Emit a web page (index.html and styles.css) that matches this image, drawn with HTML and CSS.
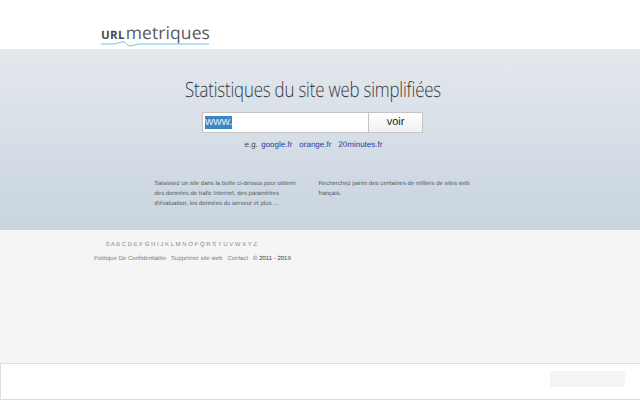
FILE: index.html
```html
<!DOCTYPE html>
<html lang="fr">
<head>
<meta charset="utf-8">
<title>URLmetriques</title>
<link rel="stylesheet" href="styles.css">
</head>
<body>
<header class="top">
  <div class="logo">
    <div class="logo-text"><span class="logo-url">URL</span><span class="logo-metriques">metriques</span></div>
    <svg class="logo-wave" width="110" height="7" viewBox="0 0 110 7"><path d="M0 3H12C17 3 19 0.8 22 0.8C25 0.8 26 5 29 5C32 5 34 3 40 3H108" fill="none" stroke="#6cc6e2" stroke-width="1"/></svg>
  </div>
</header>
<main class="hero">
  <h1 class="title">Statistiques du site web simplifiées</h1>
  <form class="search">
    <div class="search-input"><span class="selected">www.</span></div>
    <div class="search-btn">voir</div>
  </form>
  <p class="examples">e.g. <a href="#">google.fr</a><a href="#">orange.fr</a><a href="#">20minutes.fr</a></p>
  <div class="columns">
    <p class="col">Saisissez un site dans la boîte ci-dessus pour obtenir des données de trafic Internet, des paramètres d'évaluation, les données du serveur et plus ...</p>
    <p class="col">Recherchez parmi des centaines de milliers de sites web français.</p>
  </div>
</main>
<footer class="foot">
  <div class="letters">0 A B C D E F G H I J K L M N O P Q R S T U V W X Y Z</div>
  <div class="links"><a href="#">Politique De Confidentialite</a><a href="#">Supprimer site web</a><a href="#">Contact</a><span class="copy">© 2011 - 2019</span></div>
</footer>
<div class="consent"><div class="consent-btn"></div></div>
</body>
</html>
```
FILE: styles.css
```css
* { box-sizing: border-box; }
html, body { margin: 0; height: 100%; }
body { background: #f5f5f5; font-family: "Liberation Sans", Arial, sans-serif; overflow: hidden; text-rendering: geometricPrecision; }
a { text-decoration: none; color: inherit; }
.top { height: 49px; background: #fff; padding: 24px 0 0 101px; }
.logo { width: 110px; }
.logo-text { display: flex; align-items: baseline; line-height: 18px; height: 18px; }
.logo-url { font: 700 11.5px/18px "Open Sans", sans-serif; color: #4a4a4e; letter-spacing: 0.3px; margin-right: 1px; }
.logo-metriques { font: 400 17.5px/18px "Open Sans", sans-serif; color: #5a5b60; letter-spacing: 0.1px; }
.logo-wave { display: block; margin-top: -1px; }
.hero { height: 181px; background: linear-gradient(#e4e8ed, #c8d4e0); padding: 27px 15px 0 0; display: flex; flex-direction: column; align-items: center; }
.title { margin: 0; font: 300 21px/28px "Open Sans", sans-serif; color: #34373c; white-space: nowrap; letter-spacing: -0.2px; transform: scaleX(0.8); }
.search { display: flex; margin: 8px 0 0 0; height: 21px; width: 221px; }
.search-input { width: 166px; background: #fff; border: 1px solid #c4c4c4; border-right: 0; padding: 3px 2px; font-size: 11.5px; line-height: 13px; color: #e8eef5; }
.selected { background: #3a86c8; display: inline-block; height: 13px; }
.search-btn { width: 55px; border: 1px solid #c4c4c4; background: linear-gradient(#fff, #f0f0f0); text-align: center; font-size: 11px; line-height: 19px; color: #222; }
.examples { margin: 6px 0 0 2px; font-size: 8px; line-height: 12px; color: #444; }
.examples a { color: #2a3aa0; margin-left: 7px; }
.examples a:first-child { margin-left: 1px; }
.columns { display: flex; gap: 12px; margin-top: 28px; width: 316px; }
.col { margin: 0; width: 152px; font-size: 6px; line-height: 10px; color: #555a62; flex: none; }
.foot { padding-top: 12px; font-size: 6px; color: #7b7b7b; }
.letters { margin-left: 106px; line-height: 7px; color: #888; }
.links { margin: 7px 0 0 94px; line-height: 7px; display: flex; gap: 5px; }
.copy { color: #444; }
.consent { position: fixed; left: 0; right: 0; bottom: 0; height: 37px; background: #fff; border: 1px solid #dedede; border-right: 0; padding: 7px 15px 0 0; display: flex; justify-content: flex-end; }
.consent-btn { width: 75px; height: 16px; background: #f4f4f4; border-radius: 2px; }
```
